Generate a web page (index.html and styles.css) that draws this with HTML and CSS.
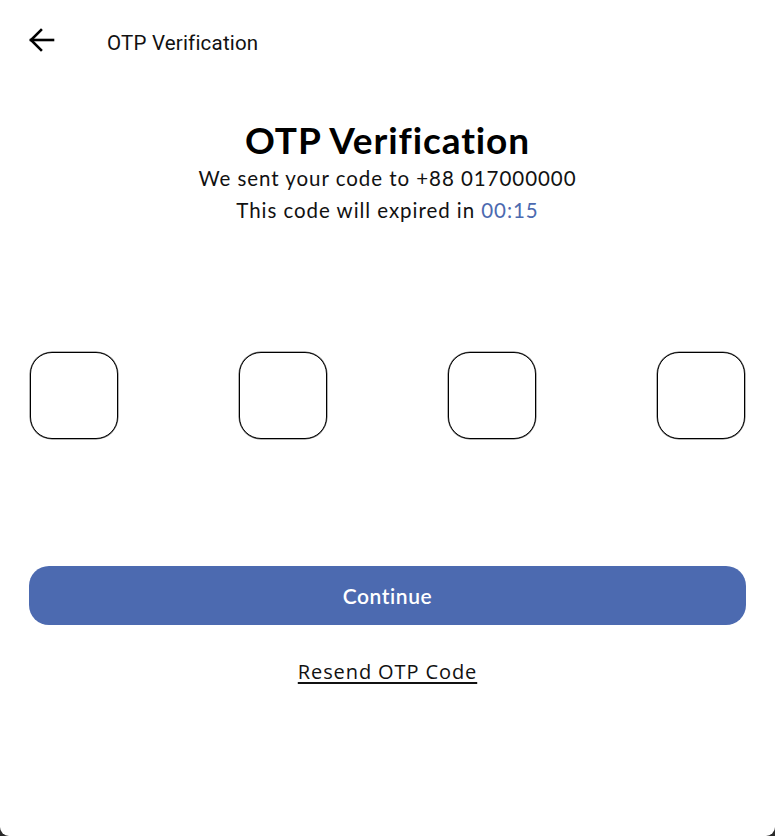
FILE: index.html
```html
<!DOCTYPE html>
<html lang="en">
<head>
<meta charset="utf-8">
<title>OTP Verification</title>
<link rel="stylesheet" href="styles.css">
</head>
<body>
<div class="screen">
  <header class="appbar">
    <button class="back" aria-label="Back">
      <svg width="36" height="36" viewBox="0 0 36 36" fill="none" stroke="#000" stroke-width="2.6" stroke-linecap="square">
        <line x1="8" y1="18" x2="30" y2="18"/>
        <polyline points="18,8 8,18 18,28" stroke-linejoin="miter"/>
      </svg>
    </button>
    <span class="appbar-title">OTP Verification</span>
  </header>

  <section class="intro">
    <h1 class="heading">OTP Verification</h1>
    <p class="sub">We sent your code to +88 017000000</p>
    <p class="sub">This code will expired in <span class="timer">00:15</span></p>
  </section>

  <div class="otp-row">
    <input class="otp-box" type="text" maxlength="1">
    <input class="otp-box" type="text" maxlength="1">
    <input class="otp-box" type="text" maxlength="1">
    <input class="otp-box" type="text" maxlength="1">
  </div>

  <button class="continue">Continue</button>

  <div class="resend-wrap">
    <a class="resend" href="#">Resend OTP Code</a>
  </div>
</div>
</body>
</html>
```

FILE: styles.css
```css
html {
  background: #2a2a2a;
}
body {
  margin: 0;
}
.screen {
  height: 836px;
  background: #fff;
  border-radius: 0 0 9px 9px;
  display: flex;
  flex-direction: column;
}
.appbar {
  height: 84px;
  display: flex;
  align-items: center;
  padding-left: 23px;
}
.back {
  width: 36px;
  height: 36px;
  padding: 0;
  border: 0;
  background: none;
  display: flex;
  margin-top: -4px;
}
.appbar-title {
  margin-left: 48px;
  margin-top: 2px;
  font-family: Roboto, sans-serif;
  font-size: 20.5px;
  letter-spacing: 0.2px;
  color: #111;
}
.intro {
  margin-top: 34px;
  text-align: center;
  font-family: Lato, sans-serif;
}
.heading {
  margin: 0;
  font-size: 37px;
  line-height: 44px;
  font-weight: 700;
  letter-spacing: 0.9px;
  color: #000;
}
.sub {
  margin: 0;
  font-size: 20.5px;
  line-height: 32px;
  color: #111;
  letter-spacing: 0.95px;
}
.timer {
  color: #4c6ab0;
}
.otp-row {
  margin-top: 126px;
  padding: 0 30px;
  display: flex;
  justify-content: space-between;
}
.otp-box {
  width: 88px;
  height: 87px;
  box-sizing: border-box;
  border: 1.5px solid #000;
  box-shadow: 0 0 0 0.5px rgba(0, 0, 0, 0.6);
  border-radius: 22px;
  background: #fff;
  padding: 0;
  text-align: center;
  font-size: 28px;
  outline: none;
}
.continue {
  margin: 127px 29px 0;
  height: 59px;
  border: 0;
  border-radius: 20px;
  background: #4c6ab0;
  color: #fff;
  font-family: Lato, sans-serif;
  font-size: 21px;
  font-weight: 600;
  letter-spacing: 0.6px;
}
.resend-wrap {
  margin-top: 32px;
  text-align: center;
  line-height: 30px;
}
.resend {
  font-family: "Open Sans", sans-serif;
  font-size: 20px;
  letter-spacing: 0.9px;
  color: #111;
  text-decoration: underline;
  text-underline-offset: 3px;
}
```
